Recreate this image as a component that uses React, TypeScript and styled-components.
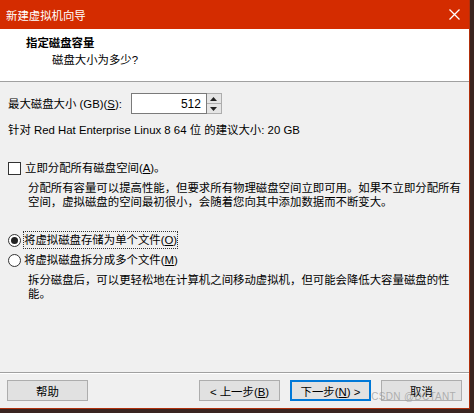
import styled, { createGlobalStyle } from "styled-components"

const Global = createGlobalStyle`
    html, body {
        margin: 0;
        padding: 0;
        background: #3a2420;
    }
    body {
        font-family: "Liberation Sans", "Noto Sans CJK SC", sans-serif;
        font-size: 11.4px;
        color: #000;
    }
`

const Window = styled.div`
    width: 469px;
    height: 408px;
    background: #f0f0f0;
    border-right: 1px solid #b0300c;
    border-bottom: 1px solid #b0300c;
    display: flex;
    flex-direction: column;
    overflow: hidden;
`

const TitleBar = styled.div`
    height: 29px;
    background: #d42c00;
    color: #fff;
    display: flex;
    align-items: center;
    justify-content: space-between;
    padding: 0 9px 0 6px;
`

const Header = styled.div`
    height: 53px;
    background: #fff;
    border-bottom: 1px solid #a0a0a0;
    padding: 6px 0 0 26px;
    box-sizing: border-box;
`

const HeadTitle = styled.div`
    font-weight: bold;
    line-height: 17px;
`

const HeadSub = styled.div`
    padding-left: 26px;
    line-height: 17px;
`

const Body = styled.div`
    flex: 1;
    padding: 11px 2px 0 8px;
    border-bottom: 1px solid #a0a0a0;
    box-shadow: 0 1px 0 #fff;
`

const Row = styled.div<{ mt?: number }>`
    display: flex;
    align-items: center;
    margin-top: ${p => p.mt || 0}px;
    line-height: 16px;
    white-space: pre;
`

const SpinBox = styled.div`
    display: flex;
    margin-left: 9px;
    height: 21px;
`

const SpinInput = styled.div`
    width: 69px;
    border: 1px solid #7a7a7a;
    background: #fff;
    display: flex;
    align-items: center;
    justify-content: flex-end;
    padding-right: 5px;
    font-size: 12px;
`

const SpinButtons = styled.div`
    width: 14px;
    display: flex;
    flex-direction: column;
    border: 1px solid #adadad;
    border-left: none;
    background: #e5e5e5;
`

const SpinBtn = styled.div<{ top?: boolean }>`
    flex: 1;
    display: flex;
    align-items: center;
    justify-content: center;
    border-bottom: ${p => (p.top ? "1px solid #adadad" : "none")};
`

const Box = styled.span`
    width: 11px;
    height: 11px;
    border: 1px solid #333;
    background: #fff;
    margin-right: 4px;
    flex-shrink: 0;
`

const Radio = styled.span<{ checked?: boolean }>`
    width: 11px;
    height: 11px;
    border: 1px solid #333;
    border-radius: 50%;
    background: #fff;
    margin-right: 3px;
    flex-shrink: 0;
    display: flex;
    align-items: center;
    justify-content: center;
    &::after {
        content: "";
        width: 7px;
        height: 7px;
        border-radius: 50%;
        background: ${p => (p.checked ? "#222" : "transparent")};
    }
`

const Focus = styled.span`
    outline: 1px dotted #333;
    outline-offset: 0;
`

const Desc = styled.div<{ mt?: number }>`
    padding-left: 20px;
    margin-top: ${p => p.mt || 0}px;
    line-height: 14px;
`

const Footer = styled.div`
    height: 35px;
    display: flex;
    align-items: center;
    padding: 0 7px;
    position: relative;
`

const Button = styled.button<{ primary?: boolean }>`
    width: 81px;
    height: 21px;
    font: inherit;
    background: #e1e1e1;
    border: 1px solid ${p => (p.primary ? "#0078d7" : "#adadad")};
    box-shadow: ${p => (p.primary ? "inset 0 0 0 1px #0078d7" : "none")};
    padding: 0;
    color: #000;
`

const Spacer = styled.div`
    flex: 1;
`

const Gap = styled.div`
    width: 10px;
`

const Watermark = styled.div`
    position: absolute;
    right: 13px;
    top: 18px;
    color: rgba(150, 150, 150, 0.7);
    font-family: "Liberation Sans", sans-serif;
    font-size: 10px;
    letter-spacing: 0.3px;
    pointer-events: none;
`

const U = styled.span`
    text-decoration: underline;
`

export default function App() {
    return (
        <>
            <Global />
            <Window>
                <TitleBar>
                    <span>新建虚拟机向导</span>
                    <svg width="11" height="11" viewBox="0 0 11 11">
                        <path d="M0.5 0.5 L10.5 10.5 M10.5 0.5 L0.5 10.5" stroke="#fff" strokeWidth="1.3" />
                    </svg>
                </TitleBar>
                <Header>
                    <HeadTitle>指定磁盘容量</HeadTitle>
                    <HeadSub>磁盘大小为多少?</HeadSub>
                </Header>
                <Body>
                    <Row>
                        <span>最大磁盘大小 (GB)(<U>S</U>):</span>
                        <SpinBox>
                            <SpinInput>512</SpinInput>
                            <SpinButtons>
                                <SpinBtn top>
                                    <svg width="7" height="4" viewBox="0 0 7 4"><path d="M0 4 L3.5 0 L7 4Z" fill="#222" /></svg>
                                </SpinBtn>
                                <SpinBtn>
                                    <svg width="7" height="4" viewBox="0 0 7 4"><path d="M0 0 L3.5 4 L7 0Z" fill="#222" /></svg>
                                </SpinBtn>
                            </SpinButtons>
                        </SpinBox>
                    </Row>
                    <Row mt={8}>针对 Red Hat Enterprise Linux 8 64 位 的建议大小: 20 GB</Row>
                    <Row mt={22}>
                        <Box />
                        <span>立即分配所有磁盘空间(<U>A</U>)。</span>
                    </Row>
                    <Desc mt={5}>
                        分配所有容量可以提高性能，但要求所有物理磁盘空间立即可用。如果不立即分配所有空间，虚拟磁盘的空间最初很小，会随着您向其中添加数据而不断变大。
                    </Desc>
                    <Row mt={23}>
                        <Radio checked />
                        <Focus>将虚拟磁盘存储为单个文件(<U>O</U>)</Focus>
                    </Row>
                    <Row mt={4}>
                        <Radio />
                        <span>将虚拟磁盘拆分成多个文件(<U>M</U>)</span>
                    </Row>
                    <Desc mt={5}>
                        拆分磁盘后，可以更轻松地在计算机之间移动虚拟机，但可能会降低大容量磁盘的性能。
                    </Desc>
                </Body>
                <Footer>
                    <Button>帮助</Button>
                    <Spacer />
                    <Button>&lt; 上一步(<U>B</U>)</Button>
                    <Gap />
                    <Button primary>下一步(<U>N</U>) &gt;</Button>
                    <Gap />
                    <Button>取消</Button>
                    <Watermark>CSDN @DCTANT</Watermark>
                </Footer>
            </Window>
        </>
    )
}
